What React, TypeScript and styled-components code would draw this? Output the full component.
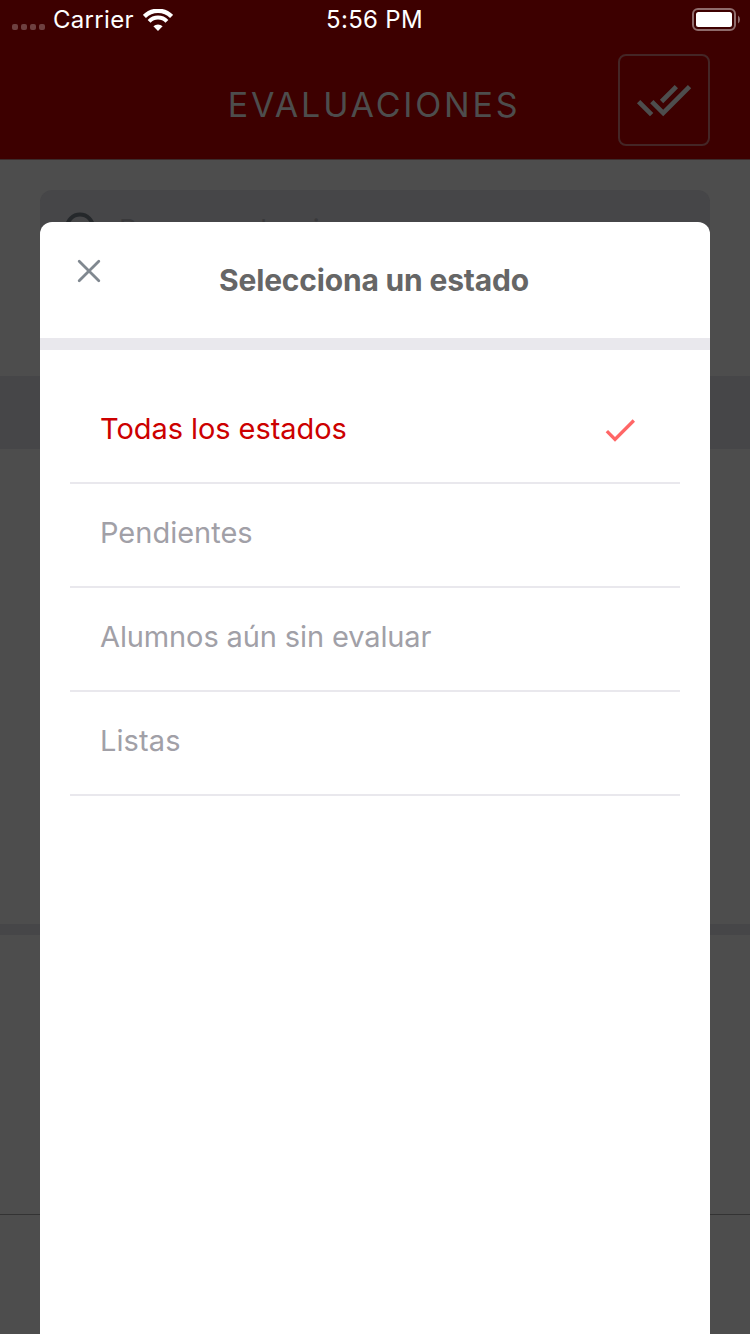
import React from "react";
import styled, { createGlobalStyle } from "styled-components";

const Global = createGlobalStyle`
  * { box-sizing: border-box; }
  body { margin: 0; background: #4d4d4d; font-family: Inter, "Liberation Sans", sans-serif; }
`;

const Screen = styled.div`
  position: relative;
  width: 750px;
  height: 1334px;
  overflow: hidden;
  background: #4d4d4d;
`;

const Header = styled.header`
  display: flex;
  flex-direction: column;
  height: 160px;
  background: #3d0000;
  border-bottom: 1px solid #3c2c2c;
`;

const StatusBar = styled.div`
  display: grid;
  grid-template-columns: 1fr auto 1fr;
  align-items: center;
  height: 40px;
  padding: 0 10px 0 12px;
  color: #fff;
  font-size: 24px;
  line-height: 40px;
`;

const Network = styled.div`
  display: flex;
  align-items: center;
`;

const Dots = styled.div`
  display: flex;
  gap: 3px;
  margin: 14px 8px 0 0;
`;

const Dot = styled.i`
  width: 6px;
  height: 6px;
  border-radius: 2px;
  background: #6e4040;
`;

const Carrier = styled.span`
  letter-spacing: 0.3px;
  margin-right: 9px;
`;

const Clock = styled.span`
  margin-right: 3px;
  letter-spacing: 0.3px;
`;

const Battery = styled.svg`
  justify-self: end;
`;

const NavBar = styled.div`
  display: grid;
  grid-template-columns: 92px 1fr 92px;
  align-items: center;
  padding: 14px 40px 0;
`;

const NavTitle = styled.h1`
  grid-column: 2;
  margin: 9px 2px 0 0;
  text-align: center;
  color: #4d4d4d;
  font-size: 34px;
  font-weight: 400;
  line-height: 40px;
  letter-spacing: 2.8px;
`;

const NavButton = styled.button`
  display: flex;
  align-items: center;
  justify-content: center;
  width: 92px;
  height: 92px;
  padding: 0;
  border: 2px solid #442626;
  border-radius: 8px;
  background: none;
`;

const SearchArea = styled.div`
  height: 216px;
  padding: 30px 40px 0;
`;

const SearchField = styled.div`
  display: flex;
  align-items: center;
  gap: 18px;
  height: 79px;
  padding-left: 24px;
  border-radius: 12px;
  background: #464648;
  color: #39393b;
  font-size: 28px;
  letter-spacing: -0.6px;
`;

const Section = styled.div<{ $height: number; $tone: string }>`
  height: ${(p) => p.$height}px;
  background: ${(p) => p.$tone};
`;

const Modal = styled.section`
  position: absolute;
  top: 222px;
  left: 40px;
  right: 40px;
  bottom: 0;
  border-radius: 12px 12px 0 0;
  background: #fff;
`;

const ModalHeader = styled.div`
  display: grid;
  grid-template-columns: 60px 1fr 60px;
  height: 128px;
  padding: 0 21px 0 19px;
  border-bottom: 12px solid #e9e8ed;
`;

const CloseButton = styled.button`
  display: flex;
  width: 60px;
  height: 60px;
  margin-top: 19px;
  padding: 18px;
  border: 0;
  background: none;
`;

const ModalTitle = styled.h2`
  margin: 38px 0 0;
  text-align: center;
  color: #666;
  font-size: 30px;
  font-weight: 700;
  line-height: 40px;
  letter-spacing: -0.18px;
  white-space: nowrap;
`;

const Options = styled.ul`
  margin: 0;
  padding: 30px 30px 0;
  list-style: none;
`;

const Option = styled.li<{ $selected?: boolean }>`
  display: flex;
  justify-content: space-between;
  height: 104px;
  padding: 30px 40px 0 30px;
  border-bottom: 2px solid #e9e8ed;
  color: ${(p) => (p.$selected ? "#cc0000" : "#a1a0a7")};
  font-size: 29px;
  line-height: 37px;
`;

const Label = styled.span<{ $spacing: number }>`
  letter-spacing: ${(p) => p.$spacing}px;
`;

const options = [
  { label: "Todas los estados", selected: true, spacing: -0.06 },
  { label: "Pendientes", spacing: 0 },
  { label: "Alumnos aún sin evaluar", spacing: -0.12 },
  { label: "Listas", spacing: 0.1 },
];

export default function App() {
  return (
    <Screen>
      <Global />
      <Header>
        <StatusBar>
          <Network>
            <Dots>
              <Dot />
              <Dot />
              <Dot />
              <Dot />
            </Dots>
            <Carrier>Carrier</Carrier>
            <svg width="30" height="22" viewBox="0 0 30 22" fill="none" stroke="#fff">
              <path d="M1.4 7.4A19.3 19.3 0 0 1 28.6 7.4" strokeWidth="4.4" />
              <path d="M6.1 12.4A12.3 12.3 0 0 1 23.9 12.4" strokeWidth="4" />
              <path d="M15 22L10.4 17.3A6.6 6.6 0 0 1 19.6 17.3Z" fill="#fff" stroke="none" />
            </svg>
          </Network>
          <Clock>5:56 PM</Clock>
          <Battery width="48" height="24" viewBox="0 0 48 24">
            <rect x="1" y="1" width="42" height="21" rx="5" fill="none" stroke="#8f6c6c" strokeWidth="2" />
            <rect x="4" y="4" width="36" height="15" rx="2.5" fill="#fff" />
            <path d="M46 7.5q2 1.5 2 4t-2 4z" fill="#8f6c6c" />
          </Battery>
        </StatusBar>
        <NavBar>
          <NavTitle>EVALUACIONES</NavTitle>
          <NavButton aria-label="Marcar todo">
            <svg width="56" height="56" viewBox="0 0 24 24" fill="#4d4d4d">
              <path d="M18 7l-1.41-1.41-6.34 6.34 1.41 1.41L18 7zm4.24-1.41L11.66 16.17 7.48 12l-1.41 1.41L11.66 19l12-12-1.42-1.41zM.41 13.41L6 19l1.41-1.41L1.83 12 .41 13.41z" />
            </svg>
          </NavButton>
        </NavBar>
      </Header>
      <SearchArea>
        <SearchField>
          <svg width="37" height="36" viewBox="0 0 37 36" fill="none" stroke="#25282b" strokeWidth="4">
            <circle cx="16" cy="15.5" r="13" />
            <path d="M25 24.5l9 9" />
          </svg>
          Buscar evaluaciones
        </SearchField>
      </SearchArea>
      <Section $height={73} $tone="#464648" />
      <Section $height={475} $tone="#4d4d4d" />
      <Section $height={11} $tone="#464648" />
      <Section $height={279} $tone="#4d4d4d" />
      <Section $height={1} $tone="#333333" />
      <Modal>
        <ModalHeader>
          <CloseButton aria-label="Cerrar">
            <svg width="24" height="24" viewBox="0 0 24 24" fill="none" stroke="#808890" strokeWidth="2.8" strokeLinecap="round">
              <path d="M2.2 2.2L21.8 21.8M21.8 2.2L2.2 21.8" />
            </svg>
          </CloseButton>
          <ModalTitle>Selecciona un estado</ModalTitle>
        </ModalHeader>
        <Options>
          {options.map((o) => (
            <Option key={o.label} $selected={o.selected}>
              <Label $spacing={o.spacing}>{o.label}</Label>
              {o.selected && (
                <svg width="40" height="40" viewBox="0 0 24 24" fill="#ff6666">
                  <path d="M9 16.17L4.83 12l-1.42 1.41L9 19 21 7l-1.41-1.41z" />
                </svg>
              )}
            </Option>
          ))}
        </Options>
      </Modal>
    </Screen>
  );
}
